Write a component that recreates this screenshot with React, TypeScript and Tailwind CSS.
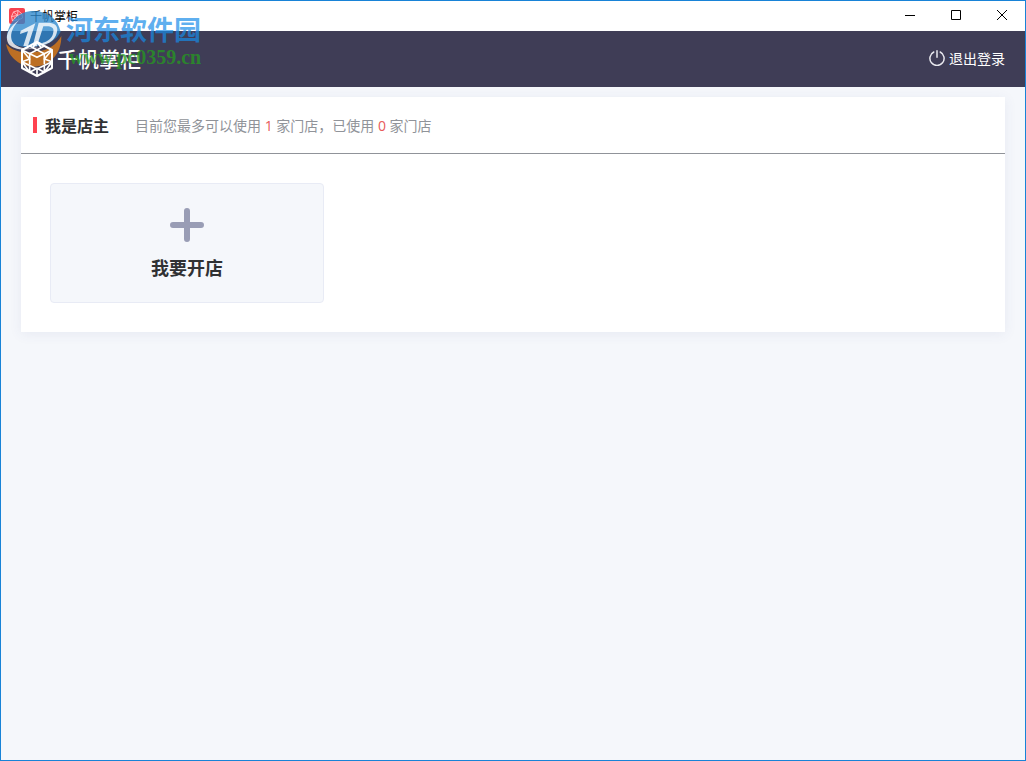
import type { ReactNode } from 'react'

const shops = { max: 1, used: 0 }

function AppIcon() {
  return (
    <svg viewBox="0 0 16 16" className="size-4" aria-hidden="true">
      <rect width="16" height="16" rx="2" fill="#f5424f" />
      <g fill="none" stroke="#ffc9cd" strokeWidth=".9">
        <path d="M2.500 8.500 4.500 4 9 2.500 13 6l.5 4-3 1.500-7 1.500z" />
        <path d="M4.500 4l4 3.500L13 6M9 2.500 8.500 7.500l-5 5.500M2.500 8.500l6-1 2 4M5 9.500l3 2.500" />
      </g>
    </svg>
  )
}

function CubeLogo() {
  return (
    <svg viewBox="0 0 96 108" className="relative z-20 h-9 w-8" fill="none" stroke="#fff" strokeLinejoin="round" aria-hidden="true">
      <path strokeWidth="6" d="M48 3 93 27v54l-45 24L3 81V27z" />
      <path strokeWidth="5" d="M3 27 48 49l45-22M48 82v23M26 38v32M70 38v32M3 62l45 22 45-22" />
      <path strokeWidth="5" d="M26 15l44 23M70 15 26 38M48 3 35 20M48 3l13 17" />
      <path strokeWidth="5" d="M3 27l23 27L3 62l23 32V72M93 27 70 54l23 8-23 32V72M26 94l22-12 22 12" />
    </svg>
  )
}

function PowerIcon() {
  return (
    <svg viewBox="0 0 16 16" className="size-4" fill="none" stroke="#e8e8ee" strokeWidth="1.500" strokeLinecap="round" aria-hidden="true">
      <path d="M4.800 2A7.100 7.100 0 1 0 11.200 2M8 .8v6.400" />
    </svg>
  )
}

function WindowButton({ label, children }: { label: string; children: ReactNode }) {
  return (
    <button type="button" aria-label={label} className="flex h-full w-[46px] items-center justify-center pb-0.5 hover:bg-gray-200">
      <svg viewBox="0 0 10 10" className="size-2.5" fill="none" stroke="#000" strokeWidth="1" aria-hidden="true">
        {children}
      </svg>
    </button>
  )
}

function Watermark() {
  return (
    <div className="pointer-events-none absolute top-2.5 left-1 z-10 flex items-start">
      <svg viewBox="15 33 174 174" className="size-[58px]" aria-hidden="true">
        <path d="M18 132c8 42 44 68 82 68 48 0 85-38 84-92-14 26-38 41-66 46-36 8-76 4-100-22z" fill="#df7d16" opacity=".78" />
        <path d="M20 112C26 62 58 33 100 33c42 0 74 24 82 62-12 24-36 38-64 43-40 8-78 4-98-26z" fill="#2b86cc" opacity=".78" />
        <g fill="#fff" opacity=".8">
          <path d="M62 92l44-22-22 68H70l14-44-24 8z" />
          <path fillRule="evenodd" d="M116 68h26c26 0 34 12 28 32-6 20-22 32-46 36l4-8c16-4 27-13 31-27 4-14 0-22-19-22h-10l-19 60h-13z" />
          <path d="M58 60C26 80 12 110 26 132c18 24 84 24 142-14-54 36-114 34-130 8-10-16-4-42 20-66z" />
        </g>
      </svg>
      <div className="ml-0.5 pt-0.5">
        <p className="pl-px font-['Noto_Sans_CJK_SC',sans-serif] text-[27px] leading-8 font-bold text-[#178ce8]/70">河东软件园</p>
        <p className="pl-1 font-['Liberation_Serif',serif] text-[20px] leading-6 font-bold text-[#259b20]/75">www.pc0359.cn</p>
      </div>
    </div>
  )
}

function TitleBar() {
  return (
    <div className="flex h-[30px] items-center bg-white pl-2">
      <AppIcon />
      <span className="ml-[5px] text-xs text-black">千帆掌柜</span>
      <div className="ml-auto flex h-full">
        <WindowButton label="最小化">
          <path d="M0 5.500h10" />
        </WindowButton>
        <WindowButton label="最大化">
          <path d="M.5.5h9v9h-9z" />
        </WindowButton>
        <WindowButton label="关闭">
          <path d="M0 0l10 10M10 0 0 10" />
        </WindowButton>
      </div>
    </div>
  )
}

export default function App() {
  return (
    <div className="relative flex min-h-screen flex-col border border-[#1883d7] bg-[#f5f7fb] font-['Noto_Sans_CJK_SC',sans-serif] text-[#303133]">
      <TitleBar />

      <header className="flex h-14 items-center justify-between bg-[#3f3d56] px-5">
        <div className="flex items-center gap-1">
          <CubeLogo />
          <span className="pb-0.5 text-[21px] leading-6 font-medium text-white">千帆掌柜</span>
        </div>
        <button type="button" className="flex items-center gap-1 pb-0.5 text-sm text-white">
          <PowerIcon />
          退出登录
        </button>
      </header>

      <main className="px-5 py-2.5">
        <section className="bg-white shadow-[0_2px_12px_rgba(60,80,140,0.08)]">
          <div className="flex h-[57px] items-center border-b border-[#909399] px-3">
            <span className="h-4 w-1 bg-[#ff4250]" />
            <h1 className="ml-2 text-base font-bold">我是店主</h1>
            <p className="ml-[26px] pt-0.5 font-['Open_Sans','Noto_Sans_CJK_SC',sans-serif] text-sm text-[#909399]">
              目前您最多可以使用 <span className="text-[#e85a5a]">{shops.max}</span> 家门店，已使用{' '}
              <span className="text-[#e85a5a]">{shops.used}</span> 家门店
            </p>
          </div>
          <div className="p-[29px]">
            <button
              type="button"
              className="flex h-[120px] w-[274px] flex-col items-center justify-center gap-[11px] rounded border border-[#e8ebf5] bg-[#f5f7fb] pt-[3px]"
            >
              <svg viewBox="0 0 34 34" className="size-[34px]" stroke="#999db5" strokeWidth="6" strokeLinecap="round" aria-hidden="true">
                <path d="M17 3v28M3 17h28" />
              </svg>
              <span className="text-lg leading-7 font-bold">我要开店</span>
            </button>
          </div>
        </section>
      </main>

      <Watermark />
    </div>
  )
}
